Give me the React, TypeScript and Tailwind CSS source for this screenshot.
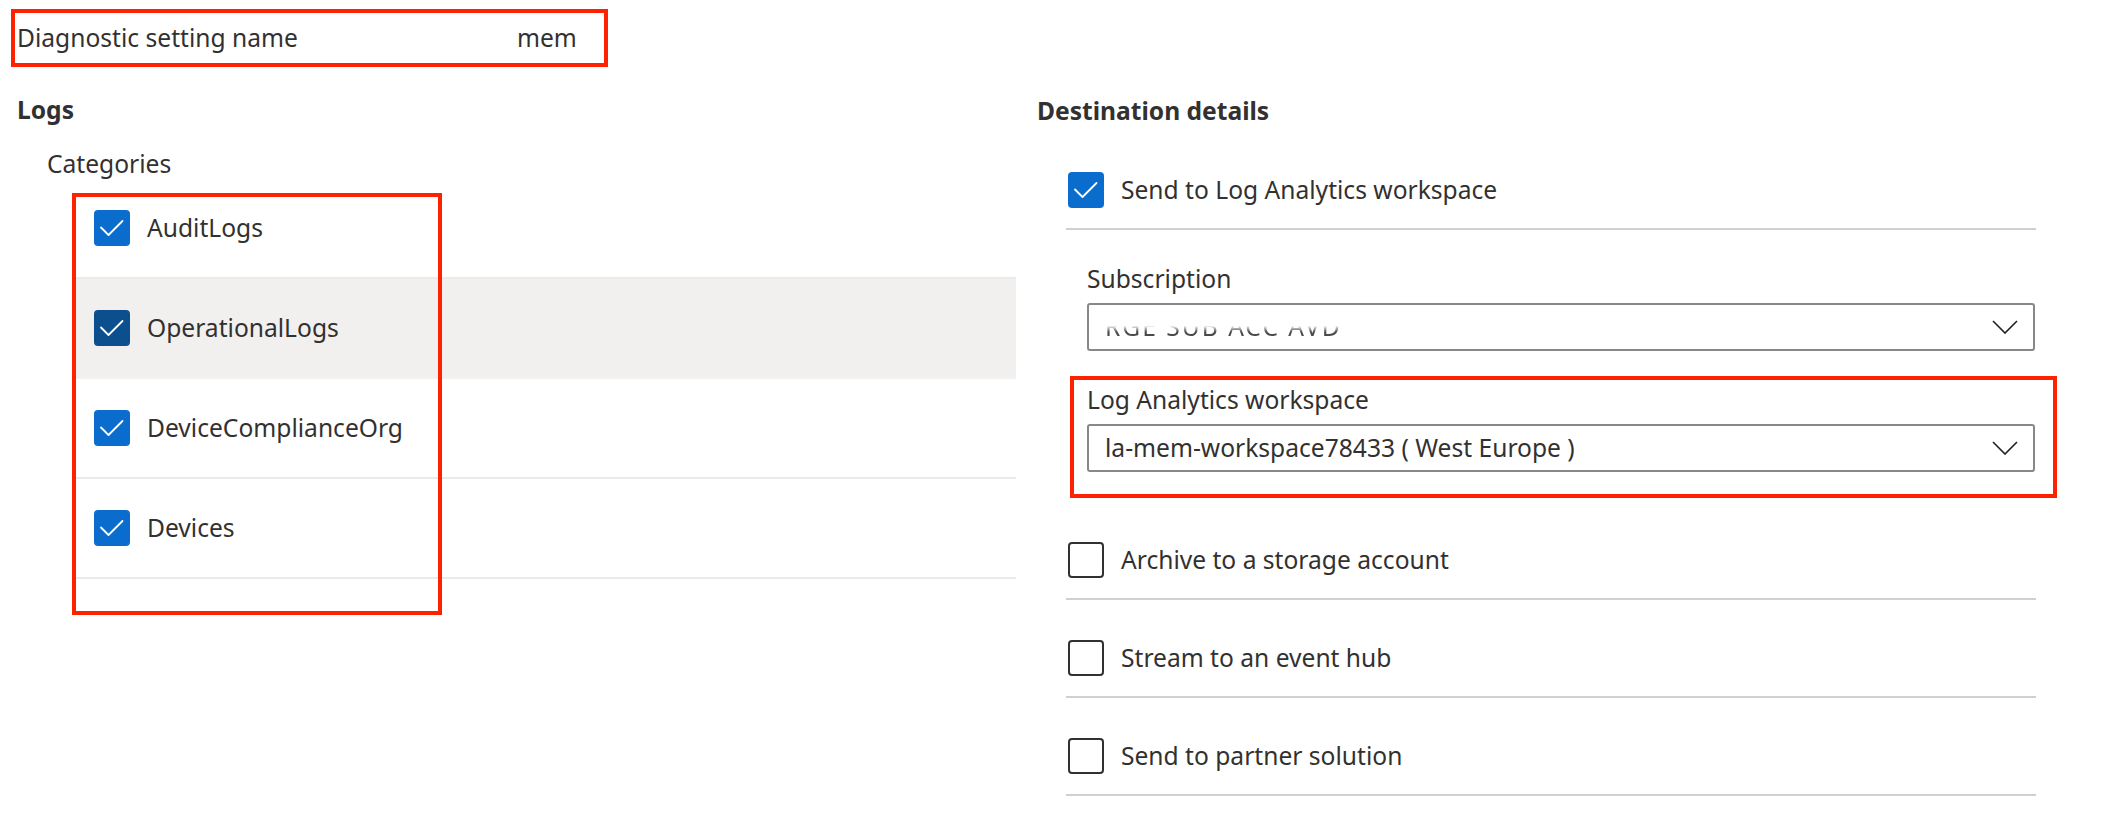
import React from 'react'

const categories = [
    { name: 'AuditLogs', hover: false },
    { name: 'OperationalLogs', hover: true },
    { name: 'DeviceComplianceOrg', hover: false },
    { name: 'Devices', hover: false },
]

const CheckMark = () => (
    <svg width="36" height="36" viewBox="0 0 36 36" fill="none">
        <path d="M7 17.5L14.5 25L28.5 11" stroke="white" strokeWidth="1.8" strokeLinecap="round" strokeLinejoin="round" />
    </svg>
)

const Chevron = () => (
    <svg width="26" height="14" viewBox="0 0 26 14" fill="none">
        <path d="M1 1L13 13L25 1" stroke="#201f1e" strokeWidth="1.6" />
    </svg>
)

const CheckBox: React.FC<{ checked?: boolean; dark?: boolean }> = ({ checked, dark }) => {
    if (!checked) {
        return <span className="block h-[36px] w-[36px] shrink-0 rounded-[4px] border-2 border-[#323130] bg-white" />
    }
    return (
        <span className={`flex h-[36px] w-[36px] shrink-0 items-center justify-center rounded-[4px] ${dark ? 'bg-[#0c4f8f]' : 'bg-[#0a6ccd]'}`}>
            <CheckMark />
        </span>
    )
}

const OptionRow: React.FC<{ label: string; checked?: boolean; top: string }> = ({ label, checked, top }) => (
    <div className={`flex items-center gap-[17px] border-b-2 border-[#d2d0ce] pb-[20px] pl-[2px] ${top}`}>
        <CheckBox checked={checked} />
        <span className="leading-[26px]">{label}</span>
    </div>
)

const Dropdown: React.FC<{ children: React.ReactNode }> = ({ children }) => (
    <div className="mt-[11px] flex h-[48px] w-[948px] items-center justify-between rounded-[3px] border-2 border-[#8a8886] pl-[16px] pr-[15px]">
        {children}
        <Chevron />
    </div>
)

export default function App() {
    return (
        <div className="h-[838px] w-[2106px] overflow-hidden bg-white pt-[9px] font-['Noto_Sans',sans-serif] text-[24.6px] text-[#323130]">
            {/* Setting name */}
            <div className="ml-[11px] flex h-[58px] w-[597px] items-center border-4 border-[#ff2200]">
                <span className="w-[502px] pl-[2px]">Diagnostic setting name</span>
                <span>mem</span>
            </div>

            <div className="flex">
                {/* Logs */}
                <div className="w-[1037px] shrink-0">
                    <div className="mt-[30px] h-[26px] pl-[17px] font-bold leading-[26px]">Logs</div>
                    <div className="mt-[28px] h-[26px] pl-[47px] leading-[26px]">Categories</div>
                    <div className="relative ml-[74px] mt-[2px] w-[942px]">
                        {categories.map((c) => (
                            <div
                                key={c.name}
                                className={`flex h-[100px] items-center gap-[17px] border-b-2 pl-[20px] ${c.hover ? 'border-[#f3f2f1] bg-[#f1f0ee]' : 'border-[#edebe9]'}`}
                            >
                                <CheckBox checked dark={c.hover} />
                                <span className="leading-[26px]">{c.name}</span>
                            </div>
                        ))}
                        <div className="pointer-events-none absolute left-[-2px] top-[14px] h-[422px] w-[370px] border-4 border-[#ff2200]" />
                    </div>
                </div>

                {/* Destination details */}
                <div className="w-[1000px]">
                    <div className="mt-[31px] h-[26px] font-bold leading-[26px]">Destination details</div>
                    <div className="ml-[29px] w-[970px]">
                        <OptionRow label="Send to Log Analytics workspace" checked top="pt-[48px]" />

                        <div className="pl-[21px]">
                            <div className="mt-[36px] h-[26px] leading-[26px]">Subscription</div>
                            <Dropdown>
                                <span className="bg-gradient-to-b from-white from-45% to-[#4a4a4a] to-70% bg-clip-text leading-[26px] tracking-[2px] text-transparent blur-[0.4px]">
                                    RGE SUB ACC AVD
                                </span>
                            </Dropdown>
                        </div>

                        <div className="ml-[4px] mt-[25px] h-[122px] w-[987px] border-4 border-[#ff2200] pl-[13px] pt-[7px]">
                            <div className="h-[26px] leading-[26px]">Log Analytics workspace</div>
                            <Dropdown>
                                <span className="leading-[26px]">la-mem-workspace78433 ( West Europe )</span>
                            </Dropdown>
                        </div>

                        <OptionRow label="Archive to a storage account" top="pt-[44px]" />
                        <OptionRow label="Stream to an event hub" top="pt-[40px]" />
                        <OptionRow label="Send to partner solution" top="pt-[40px]" />
                    </div>
                </div>
            </div>
        </div>
    )
}
